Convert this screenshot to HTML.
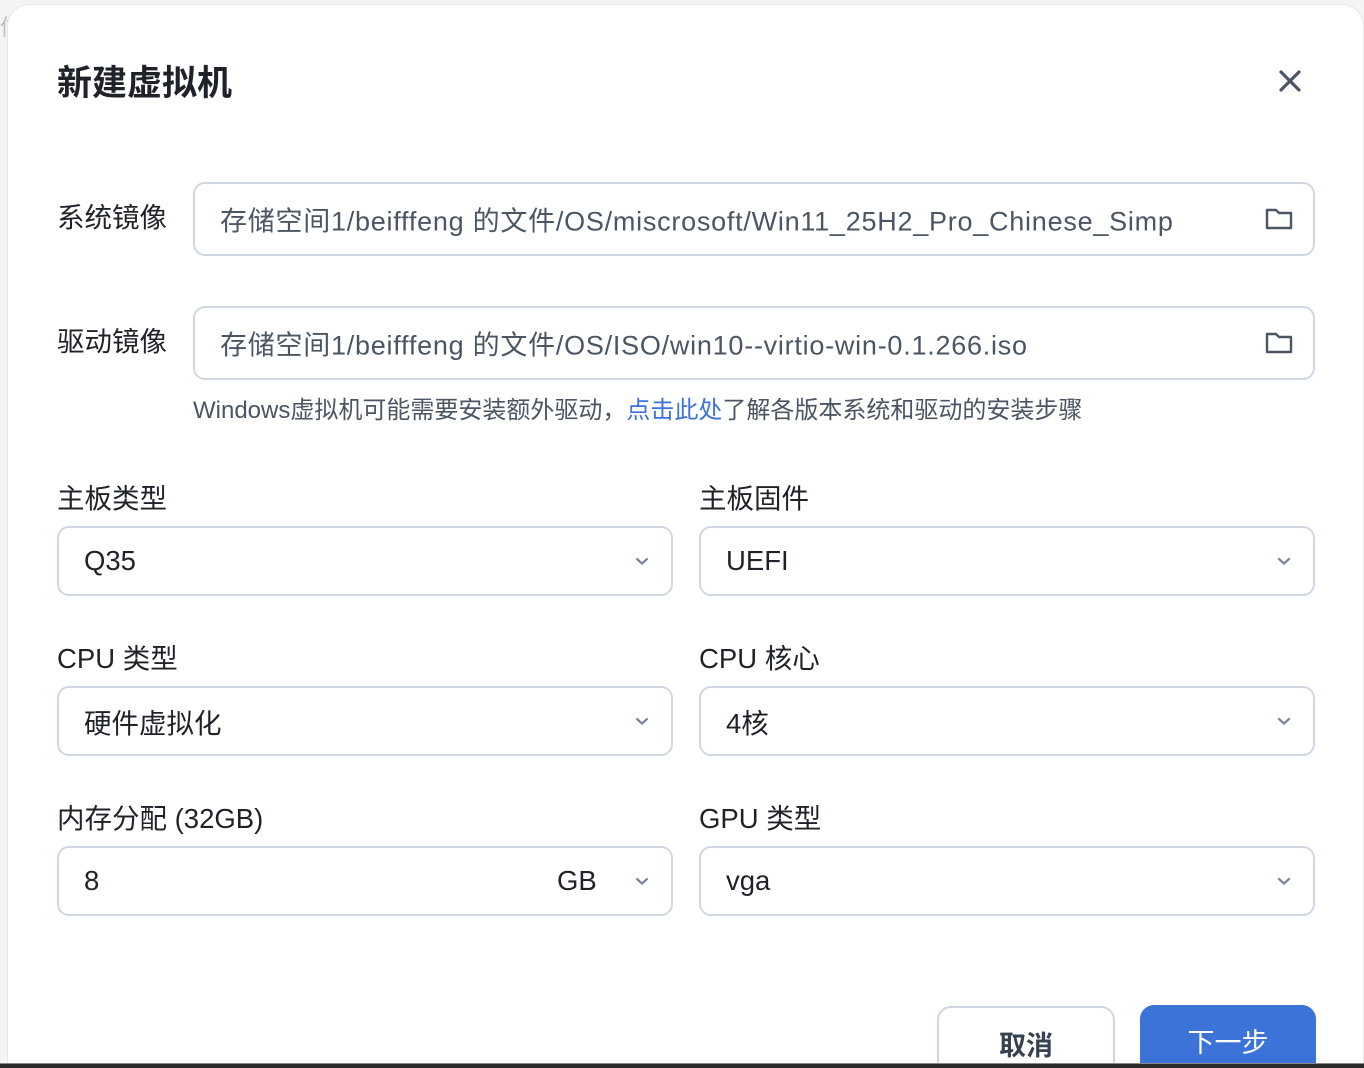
<!DOCTYPE html>
<html><head><meta charset="utf-8"><style>
*{box-sizing:border-box;margin:0;padding:0}
html,body{width:1364px;height:1068px;overflow:hidden}
body{background:#f3f4f6;font-family:"Liberation Sans","Noto Sans CJK SC",sans-serif;position:relative}
.dlg{position:absolute;left:7px;top:4px;width:1357px;height:1064px;background:#fff;border-top-left-radius:22px;border-top-right-radius:22px;border:1px solid #e5e7eb;border-bottom:none}
.abs{position:absolute}
.title{left:57px;top:55px;font-size:35px;font-weight:bold;color:#1f2329}
.lbl{font-size:27.5px;color:#1f2329}
.box{border:2px solid #cfd7e2;border-radius:12px;background:#fff}
.val{font-size:27.5px;color:#1f2329;position:absolute;left:25px;top:50%;transform:translateY(-50%);white-space:nowrap}
.path{color:#4b5563;font-size:27px;letter-spacing:0.75px}
.chev{position:absolute;right:22px;top:50%;transform:translateY(-50%)}
.fold{position:absolute;right:20px;top:50%;transform:translateY(-50%)}
.btn{border-radius:14px;font-size:27px;font-weight:bold;text-align:center;line-height:76px}
</style></head><body>
<div class="abs" style="left:0;top:10px;font-size:22px;color:#bbb">信</div>
<div class="dlg"></div>
<div class="abs title">新建虚拟机</div>
<svg class="abs" style="left:1278px;top:69px" width="24" height="24" viewBox="0 0 24 24"><path d="M3 3L21 21M21 3L3 21" stroke="#4b5563" stroke-width="3.2" stroke-linecap="round"/></svg>

<div class="abs lbl" style="left:57px;top:195px">系统镜像</div>
<div class="abs box" style="left:193px;top:182px;width:1122px;height:74px"><span class="val path">存储空间1/beifffeng 的文件/OS/miscrosoft/Win11_25H2_Pro_Chinese_Simp</span>
<svg class="fold" width="28" height="24" viewBox="0 0 28 24"><path d="M2 3H11L14 6H26V21H2Z" fill="none" stroke="#4b5563" stroke-width="2.4" stroke-linejoin="round"/></svg></div>

<div class="abs lbl" style="left:57px;top:319px">驱动镜像</div>
<div class="abs box" style="left:193px;top:306px;width:1122px;height:74px"><span class="val path">存储空间1/beifffeng 的文件/OS/ISO/win10--virtio-win-0.1.266.iso</span>
<svg class="fold" width="28" height="24" viewBox="0 0 28 24"><path d="M2 3H11L14 6H26V21H2Z" fill="none" stroke="#4b5563" stroke-width="2.4" stroke-linejoin="round"/></svg></div>
<div class="abs" style="left:193px;top:390px;font-size:24px;color:#4b5563;white-space:nowrap">Windows虚拟机可能需要安装额外驱动，<span style="color:#3b73d9">点击此处</span>了解各版本系统和驱动的安装步骤</div>

<div class="abs lbl" style="left:57px;top:476px">主板类型</div>
<div class="abs lbl" style="left:699px;top:476px">主板固件</div>
<div class="abs box" style="left:57px;top:526px;width:616px;height:70px"><span class="val">Q35</span><svg class="chev" width="14" height="10" viewBox="0 0 14 10"><path d="M2 3L7 7.5L12 3" fill="none" stroke="#7b8699" stroke-width="2.2" stroke-linecap="round"/></svg></div>
<div class="abs box" style="left:699px;top:526px;width:616px;height:70px"><span class="val">UEFI</span><svg class="chev" width="14" height="10" viewBox="0 0 14 10"><path d="M2 3L7 7.5L12 3" fill="none" stroke="#7b8699" stroke-width="2.2" stroke-linecap="round"/></svg></div>

<div class="abs lbl" style="left:57px;top:636px">CPU 类型</div>
<div class="abs lbl" style="left:699px;top:636px">CPU 核心</div>
<div class="abs box" style="left:57px;top:686px;width:616px;height:70px"><span class="val">硬件虚拟化</span><svg class="chev" width="14" height="10" viewBox="0 0 14 10"><path d="M2 3L7 7.5L12 3" fill="none" stroke="#7b8699" stroke-width="2.2" stroke-linecap="round"/></svg></div>
<div class="abs box" style="left:699px;top:686px;width:616px;height:70px"><span class="val">4核</span><svg class="chev" width="14" height="10" viewBox="0 0 14 10"><path d="M2 3L7 7.5L12 3" fill="none" stroke="#7b8699" stroke-width="2.2" stroke-linecap="round"/></svg></div>

<div class="abs lbl" style="left:57px;top:796px">内存分配 (32GB)</div>
<div class="abs lbl" style="left:699px;top:796px">GPU 类型</div>
<div class="abs box" style="left:57px;top:846px;width:616px;height:70px"><span class="val">8</span><span class="val" style="left:498px">GB</span><svg class="chev" width="14" height="10" viewBox="0 0 14 10"><path d="M2 3L7 7.5L12 3" fill="none" stroke="#7b8699" stroke-width="2.2" stroke-linecap="round"/></svg></div>
<div class="abs box" style="left:699px;top:846px;width:616px;height:70px"><span class="val">vga</span><svg class="chev" width="14" height="10" viewBox="0 0 14 10"><path d="M2 3L7 7.5L12 3" fill="none" stroke="#7b8699" stroke-width="2.2" stroke-linecap="round"/></svg></div>

<div class="abs btn" style="left:937px;top:1006px;width:178px;height:80px;border:2px solid #cfd7e2;color:#374151;background:#fff">取消</div>
<div class="abs btn" style="left:1140px;top:1005px;width:176px;height:80px;background:#3b73d9;color:#fff;font-weight:normal">下一步</div>
<div class="abs" style="left:0;top:1063px;width:1364px;height:5px;background:#2a2a2a;border-top:1px solid #888;z-index:5"></div>
</body></html>
